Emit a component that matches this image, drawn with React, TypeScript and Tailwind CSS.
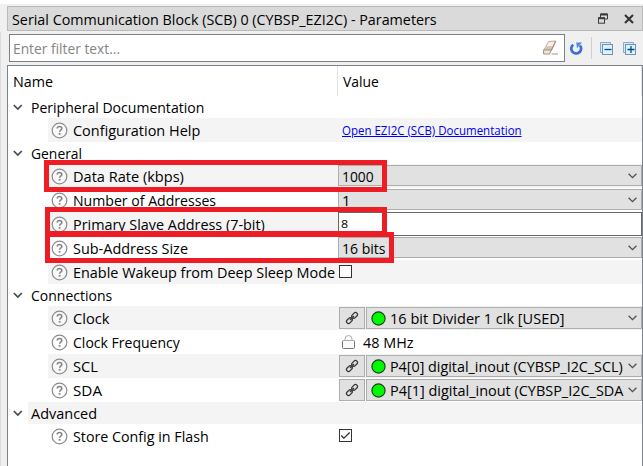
import { useLayoutEffect, useRef, useState, type ReactNode } from "react";

/** Single line of text condensed or stretched to a given advance width. */
function Fit({ w, children, className = "" }: { w: number; children: string; className?: string }) {
  const ref = useRef<HTMLSpanElement>(null);
  const [scale, setScale] = useState(1);
  useLayoutEffect(() => {
    const measure = () => {
      if (ref.current && ref.current.offsetWidth) setScale(w / ref.current.offsetWidth);
    };
    measure();
    document.fonts.ready.then(measure);
  }, [w]);
  return (
    <span className="block shrink-0" style={{ width: w }}>
      <span
        ref={ref}
        className={"inline-block origin-left whitespace-nowrap " + className}
        style={{ transform: `scaleX(${scale})` }}
      >
        {children}
      </span>
    </span>
  );
}

function Help() {
  return (
    <svg className="ml-[2.5px] mr-[5.5px] shrink-0" width="17" height="17" viewBox="0 0 17 17" fill="none">
      <circle cx="8.5" cy="8.5" r="7.3" stroke="#8c8c8c" strokeWidth="1.2" fill="#fff" fillOpacity=".5" />
      <path d="M6.2 6.6c0-1.4 1-2.1 2.3-2.1s2.3.8 2.3 1.9c0 1.7-2.2 1.7-2.2 3.4" stroke="#858585" strokeWidth="1.6" />
      <rect x="7.7" y="10.9" width="1.8" height="1.8" fill="#858585" />
    </svg>
  );
}

function Down() {
  return (
    <svg className="ml-auto mr-[4px] shrink-0" width="9" height="6" viewBox="0 0 9 6" fill="none">
      <path d="M.6.8 4.5 4.7 8.4.8" stroke="#505050" strokeWidth="1.3" />
    </svg>
  );
}

function Combo({ children }: { children: ReactNode }) {
  return (
    <div className="mt-px flex h-[21px] min-w-0 flex-1 items-center self-start border border-[#adadad] bg-[#e1e1e1] pl-[3px]">
      {children}
      <Down />
    </div>
  );
}

function Linked({ children }: { children: ReactNode }) {
  return (
    <div className="flex flex-1 gap-px pl-px">
      <div className="flex h-[22px] w-[26px] items-center justify-center border border-[#adadad] bg-[#e1e1e1]">
        <svg className="-mt-px" width="14" height="14" viewBox="0 0 14 14" fill="none" stroke="#333" strokeWidth="1.25">
          <rect x="-3.2" y="-2" width="6.4" height="4" rx="2" transform="translate(9.6 4.4) rotate(-45)" />
          <rect x="-3.2" y="-2" width="6.4" height="4" rx="2" transform="translate(4.4 9.6) rotate(-45)" />
          <path d="m5 9 4-4" />
        </svg>
      </div>
      <div className="flex h-[22px] w-[276px] items-center border border-[#adadad] bg-[#e1e1e1]">
        <svg className="ml-[4px] mr-[4px] shrink-0" width="15" height="15" viewBox="0 0 15 15">
          <circle cx="7.5" cy="7.5" r="6.6" fill="#00f800" stroke="#163d16" strokeWidth="1.1" />
        </svg>
        <div className="h-5 w-[234px] shrink-0 overflow-hidden leading-[20px]">{children}</div>
        <Down />
      </div>
    </div>
  );
}

function Group({ name, w, shade }: { name: string; w: number; shade?: boolean }) {
  return (
    <div className="flex h-[22px]">
      <div className="flex w-5 items-center pl-[5px]">
        <svg width="10" height="7" viewBox="0 0 10 7" fill="none">
          <path d="M.8 1 4.8 5 8.8 1" stroke="#4a4a4a" strokeWidth="1.7" />
        </svg>
      </div>
      <div className={"flex flex-1 items-center pl-[3px] " + (shade ? "bg-[#f4f4f4]" : "")}>
        <Fit w={w}>{name}</Fit>
      </div>
    </div>
  );
}

function Row({ name, w, shade, children }: { name: string; w: number; shade?: boolean; children: ReactNode }) {
  return (
    <div className="flex h-6 pl-10">
      <div className={"flex flex-1 " + (shade ? "bg-[#f4f4f4]" : "")}>
        <div className="flex w-[290px] shrink-0 items-center">
          <Help />
          <Fit w={w}>{name}</Fit>
        </div>
        <div className="flex min-w-0 flex-1 items-center">{children}</div>
      </div>
    </div>
  );
}

export default function App() {
  return (
    <div className="relative flex h-[466px] w-[643px] flex-col overflow-hidden bg-[#f0f0f0] pl-[7px] font-['Open_Sans','Noto_Sans',sans-serif] text-[14.7px] leading-[22px] text-black">
      <div className="-ml-[7px] h-1 shrink-0 bg-white" />
      <header className="mt-[2px] flex h-[25px] shrink-0 items-center border border-[#b9b9b9] bg-[#dadada] pl-1">
        <Fit w={425}>Serial Communication Block (SCB) 0 (CYBSP_EZI2C) - Parameters</Fit>
        <div className="ml-auto flex items-center pr-[8px]">
          <svg width="10" height="11" viewBox="0 0 10 11" fill="none" stroke="#3b3b3b">
            <path d="M2.5 4V1h7v5H7" />
            <path d="M2.5 1.5h7" strokeWidth="2" />
            <rect x=".5" y="5" width="6" height="5.2" />
            <path d="M0 5.2h7" strokeWidth="2" />
          </svg>
          <svg width="10" height="10" viewBox="0 0 10 10" className="ml-4" stroke="#333" strokeWidth="2.1">
            <path d="m1 1 8 8M9 1 1 9" />
          </svg>
        </div>
      </header>
      <div className="flex h-[34px] shrink-0 items-center pl-[2px]">
        <div className="flex h-7 w-[556px] items-center border border-[#7a8187] bg-white pl-[3px] pr-[5px] text-[#858585]">
          <Fit w={107}>Enter filter text...</Fit>
          <svg className="ml-auto" width="16" height="16" viewBox="0 0 16 16">
            <path d="m5.7 1.5 7.3-.5-4.2 9-8 0z" fill="#f5f0e9" stroke="#b5a48f" strokeWidth=".9" />
            <path d="m3.5 6.3 7.2-.4L8.2 10l-1.7 3.8H.6V10z" fill="#d3c5b4" />
            <path d="M.6 10h7.8L6.5 14H.6zm7.8 0 4.2-9M8.5 14H15" fill="#eee7dc" stroke="#9b8771" strokeWidth=".9" />
          </svg>
        </div>
        <svg className="ml-[5px]" width="13" height="13" viewBox="0 0 13 13" fill="none">
          <path d="M3.2 2.7A4.9 4.9 0 1 0 10 3.5" stroke="#3c6fd2" strokeWidth="2.7" />
          <path d="M6.2.6h5.9L7 6.2z" fill="#5488e5" />
        </svg>
        <div className="ml-[8px] h-[22px] w-px bg-[#cfcfcf]" />
        {["M4.5 7.5h7", "M4.5 7.5h7M8 4v7"].map((d, i) => (
          <svg key={d} className={i ? "mt-px ml-[10px]" : "mt-px ml-[8px]"} width="13" height="13" viewBox="0 0 13 13" fill="none">
            <path d="M2 10.5H.5V.5h10V2" fill="#d3edff" stroke="#88a9c7" />
            <rect x="2.5" y="2.5" width="10" height="10" fill="#d9f2ff" stroke="#7890ac" />
            <path d={d} stroke="#064d82" strokeWidth="1.3" />
          </svg>
        ))}
      </div>
      <main className="flex min-h-0 flex-1 flex-col border-x border-t border-[#7c838d] bg-white">
        <div className="flex h-[30px] shrink-0">
          <div className="w-[330px] border-r border-[#e2e2e2] pl-[5px] pt-1">
            <Fit w={40}>Name</Fit>
          </div>
          <div className="flex-1 border-r border-[#e2e2e2] pl-[5px] pt-1">
            <Fit w={36}>Value</Fit>
          </div>
        </div>
        <Group name="Peripheral Documentation" w={173} />
        <Row name="Configuration Help" w={127} shade>
          <div className="-mt-px pl-1 text-[11.7px] text-[#0000f0]">
            <Fit w={180} className="underline">Open EZI2C (SCB) Documentation</Fit>
          </div>
        </Row>
        <Group name="General" w={51} />
        <Row name="Data Rate (kbps)" w={111} shade>
          <Combo><Fit w={32}>1000</Fit></Combo>
        </Row>
        <Row name="Number of Addresses" w={143}>
          <Combo><Fit w={8}>1</Fit></Combo>
        </Row>
        <Row name="Primary Slave Address (7-bit)" w={192} shade>
          <div className="flex h-6 flex-1 items-center border border-[#686868] bg-white pl-[2px] text-[10.7px]">
            <Fit w={7}>8</Fit>
          </div>
        </Row>
        <Row name="Sub-Address Size" w={115}>
          <Combo><Fit w={44}>16 bits</Fit></Combo>
        </Row>
        <Row name="Enable Wakeup from Deep Sleep Mode" w={262} shade>
          <div className="-mt-px ml-px h-[13px] w-[13px] border border-[#333] bg-white" />
        </Row>
        <Group name="Connections" w={81} />
        <Row name="Clock" w={37} shade>
          <Linked><Fit w={175}>16 bit Divider 1 clk [USED]</Fit></Linked>
        </Row>
        <Row name="Clock Frequency" w={107}>
          <svg className="ml-1" width="13" height="14" viewBox="0 0 13 14" fill="none">
            <path d="M3 6V4a3.5 3.5 0 0 1 7 0v2" stroke="#aaa" />
            <rect x=".5" y="5.5" width="12" height="8" rx="1" fill="#fafafa" stroke="#777" />
            <path d="M1 5.5h11" stroke="#aaa" />
          </svg>
          <div className="ml-2"><Fit w={51}>48 MHz</Fit></div>
        </Row>
        <Row name="SCL" w={25} shade>
          <Linked><Fit w={233}>P4[0] digital_inout (CYBSP_I2C_SCL)</Fit></Linked>
        </Row>
        <Row name="SDA" w={29}>
          <Linked><Fit w={238}>P4[1] digital_inout (CYBSP_I2C_SDA)</Fit></Linked>
        </Row>
        <Group name="Advanced" w={66} shade />
        <Row name="Store Config in Flash" w={136}>
          <svg className="-mt-px ml-px" width="13" height="13" viewBox="0 0 13 13" fill="#fff" stroke="#333">
            <rect x=".5" y=".5" width="12" height="12" />
            <path d="m2.2 6.5 2.7 2.7 5.8-5.7" fill="none" strokeWidth="1.3" />
          </svg>
        </Row>
      </main>
      {/* Callout frames over the highlighted settings */}
      <div className="absolute left-[44px] top-[160px] h-8 w-[343px] border-5 border-[#ee1c24]" />
      <div className="absolute left-[45px] top-[207px] h-[29px] w-[342px] border-5 border-[#ee1c24]" />
      <div className="absolute left-[45px] top-[232px] h-[31px] w-[349px] border-5 border-[#ee1c24]" />
      <div className="absolute left-0 top-8 h-[434px] w-px bg-[#dcdcdc]" />
    </div>
  );
}
